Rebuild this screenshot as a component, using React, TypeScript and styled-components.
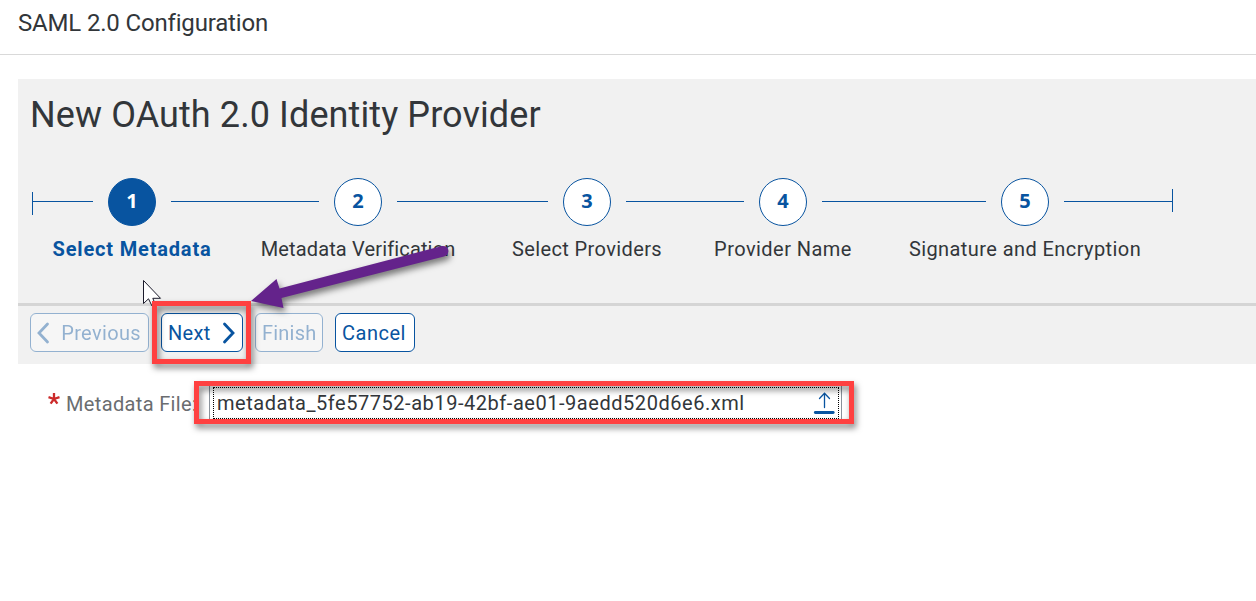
import React from "react";
import styled, { createGlobalStyle } from "styled-components";

const GlobalStyle = createGlobalStyle`
  * { box-sizing: border-box; }
  body { margin: 0; background: #fff; overflow: hidden; }
`;

const blue = "#0854a0";

const Page = styled.div`
  position: relative;
  width: 1256px;
  height: 601px;
  overflow: hidden;
  background: #fff;
  color: #32363a;
  font-family: Roboto, "Noto Sans", sans-serif;
  white-space: nowrap;
`;

const Header = styled.header`
  height: 55px;
  padding: 7px 18px 0;
  border-bottom: 1px solid #d9d9d9;
  font-size: 24px;
  line-height: 32px;
`;

const Text = styled.span<{ $ls?: number }>`
  letter-spacing: ${(p) => p.$ls ?? 0}px;
`;

const Panel = styled.section`
  margin: 24px 0 0 18px;
  height: 285px;
  background: #f1f1f1;
`;

const Title = styled.h1`
  margin: 0;
  height: 99px;
  padding: 12px 0 0 12px;
  font-size: 36px;
  font-weight: 400;
  line-height: 48px;
`;

const Steps = styled.div`
  display: flex;
  align-items: flex-start;
  height: 125px;
  padding-left: 14px;
`;

const Line = styled.div<{ $w: number }>`
  flex: none;
  width: ${(p) => p.$w}px;
  height: 1px;
  margin-top: 23px;
  background: ${blue};
`;

const Tick = styled.div<{ $top: number }>`
  flex: none;
  width: 1px;
  height: 23px;
  margin-top: ${(p) => p.$top}px;
  background: ${blue};
`;

const Step = styled.div`
  flex: none;
  display: flex;
  flex-direction: column;
  align-items: center;
  width: 48px;
  margin: 0 15px;
`;

const Circle = styled.div<{ $active?: boolean }>`
  display: flex;
  flex: none;
  align-items: center;
  justify-content: center;
  width: 48px;
  height: 48px;
  padding-bottom: 3px;
  border: 1px solid ${blue};
  border-radius: 50%;
  background: ${(p) => (p.$active ? blue : "#fff")};
  color: ${(p) => (p.$active ? "#fff" : blue)};
  font: 700 20px "Noto Sans", sans-serif;
`;

const StepLabel = styled.div<{ $active?: boolean; $ls: number }>`
  margin-top: 9px;
  font-size: 20px;
  line-height: 28px;
  letter-spacing: ${(p) => p.$ls}px;
  font-weight: ${(p) => (p.$active ? 700 : 400)};
  color: ${(p) => (p.$active ? blue : "#32363a")};
`;

const Toolbar = styled.div`
  display: flex;
  gap: 12px;
  height: 61px;
  padding: 7px 0 0 12px;
  border-top: 3px solid #d5d5d5;
`;

const Button = styled.button<{ $w: number }>`
  display: flex;
  align-items: center;
  justify-content: space-between;
  width: ${(p) => p.$w}px;
  height: 39px;
  padding: 0 7px 0 6px;
  border: 1px solid ${blue};
  border-radius: 6px;
  background: #fff;
  color: ${blue};
  font: 400 20px Roboto, sans-serif;
  white-space: nowrap;
  &:disabled {
    opacity: 0.4;
  }
`;

const Form = styled.div`
  display: flex;
  align-items: flex-start;
  padding: 20px 0 0 48px;
`;

const Asterisk = styled.svg`
  flex: none;
  width: 12px;
  height: 12px;
  margin-top: 9px;
`;

const Label = styled.label`
  width: 143px;
  margin: 6px 0 0 6px;
  color: #6a6d70;
  font-size: 20px;
  line-height: 28px;
`;

const FileField = styled.div`
  width: 633px;
  height: 38px;
  padding: 2px 2px 2px 3px;
  border: 1px solid #89919a;
`;

const FocusArea = styled.div`
  display: flex;
  align-items: center;
  justify-content: space-between;
  width: 626px;
  height: 32px;
  padding: 0 3px;
  border: 1px dotted #000;
  font-size: 20px;
`;

const Highlight = styled.div<{ $x: number; $y: number; $w: number; $h: number }>`
  position: absolute;
  left: ${(p) => p.$x}px;
  top: ${(p) => p.$y}px;
  width: ${(p) => p.$w}px;
  height: ${(p) => p.$h}px;
  border: 5px solid #ff4141;
  filter: drop-shadow(2px 4px 3px rgba(0, 0, 0, 0.5));
`;

const Overlay = styled.svg`
  position: absolute;
  left: 130px;
  top: 230px;
  width: 340px;
  height: 100px;
  overflow: visible;
`;

const ArrowGroup = styled.g`
  filter: drop-shadow(2px 4px 3px rgba(0, 0, 0, 0.5));
`;

const Chevron = ({ d }: { d: string }) => (
  <svg width="14" height="22" viewBox="0 0 14 22" fill="none" stroke="currentColor" strokeWidth="2.8" strokeLinecap="round" strokeLinejoin="miter">
    <path d={d} />
  </svg>
);

const steps = [
  { label: "Select Metadata", ls: 0.83, after: 148 },
  { label: "Metadata Verification", ls: 0.15, after: 151 },
  { label: "Select Providers", ls: 0.38, after: 118 },
  { label: "Provider Name", ls: 0.45, after: 164 },
  { label: "Signature and Encryption", ls: 0.42, after: 108 },
];

export default function App() {
  return (
    <Page>
      <GlobalStyle />
      <Header><Text $ls={-0.17}>SAML 2.0 Configuration</Text></Header>
      <Panel>
        <Title><Text $ls={0.1}>New OAuth 2.0 Identity Provider</Text></Title>
        <Steps>
          <Tick $top={14} />
          <Line $w={60} />
          {steps.map((s, i) => (
            <React.Fragment key={s.label}>
              <Step>
                <Circle $active={i === 0}>{i + 1}</Circle>
                <StepLabel $active={i === 0} $ls={s.ls}>{s.label}</StepLabel>
              </Step>
              <Line $w={s.after} />
            </React.Fragment>
          ))}
          <Tick $top={11} />
        </Steps>
        <Toolbar>
          <Button $w={119} disabled>
            <Chevron d="M10.5 2 L2 11 L10.5 20" />
            <Text $ls={0.35}>Previous</Text>
          </Button>
          <Button $w={82}>
            <Text $ls={0.35}>Next</Text>
            <Chevron d="M3.5 2 L12 11 L3.5 20" />
          </Button>
          <Button $w={68} disabled><Text $ls={0.2}>Finish</Text></Button>
          <Button $w={80}><Text $ls={0.5}>Cancel</Text></Button>
        </Toolbar>
      </Panel>
      <Form>
        <Asterisk viewBox="0 0 12 12" stroke="#cc2b2b" strokeWidth="2.3" fill="none">
          <path d="M6 6V0M6 6L0.5 4.2M6 6L11.5 4.2M6 6L2.6 10.7M6 6L9.4 10.7" />
        </Asterisk>
        <Label><Text $ls={0.35}>Metadata File:</Text></Label>
        <FileField>
          <FocusArea>
            <Text $ls={0.54}>metadata_5fe57752-ab19-42bf-ae01-9aedd520d6e6.xml</Text>
            <svg width="22" height="24" viewBox="0 0 22 24" fill="none" stroke={blue} strokeLinecap="round">
              <path d="M11.5 16.5V2.5M6.5 7.5L11.5 2.3L16.5 7.5" strokeWidth="1.3" />
              <path d="M2.3 21.5H20.2" strokeWidth="2.8" />
            </svg>
          </FocusArea>
        </FileField>
      </Form>
      <Overlay viewBox="130 230 340 100">
        <path d="M143.5 280.5V303.5L148.5 298.8L152 306H156L152.8 298.3H160.5Z" fill="#fff" stroke="#1b1b2b" />
      </Overlay>
      <Highlight $x={152} $y={301} $w={99} $h={63} />
      <Highlight $x={194} $y={381} $w={660} $h={43} />
      <Overlay viewBox="130 230 340 100">
        <ArrowGroup>
          <path d="M251 301L276.5 279L279.5 288.5L442 246Q448 245.5 448.5 251Q448 255.5 444 256.5L281.5 298L283.5 308Z" fill="#64238b" />
        </ArrowGroup>
      </Overlay>
    </Page>
  );
}
